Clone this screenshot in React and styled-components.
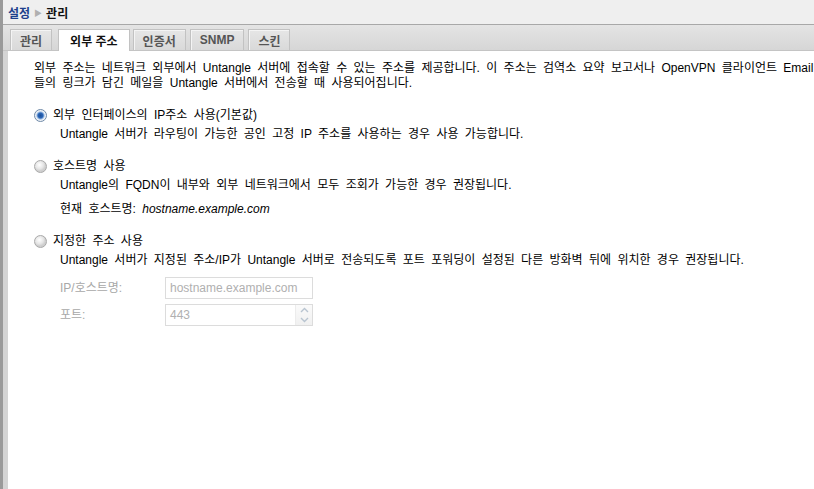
import React from "react";
import styled, { createGlobalStyle } from "styled-components";

const Global = createGlobalStyle`
  html, body { margin: 0; padding: 0; background: #fff; overflow: hidden; }
  body { font-family: "Liberation Sans", "Noto Sans CJK KR", sans-serif; font-size: 12px; color: #000; }
`;

const Page = styled.div`
  width: 814px;
  height: 489px;
  display: flex;
  flex-direction: column;
  border-left: 3px solid #9a9a9a;
  box-sizing: border-box;
  overflow: hidden;
`;

const Header = styled.div`
  height: 24px;
  flex: none;
  display: flex;
  align-items: center;
  padding-left: 5px;
  background: #efefef;
  border-bottom: 1px solid #a8a8a8;
  font-weight: bold;
  gap: 4px;
`;

const Crumb = styled.span`
  color: ${(p) => (p.$link ? "#1d3f8c" : "#111")};
`;

const Sep = styled.span`
  color: #b0b0b0;
  font-size: 8px;
`;

const TabStrip = styled.div`
  height: 25px;
  flex: none;
  display: flex;
  align-items: flex-end;
  gap: 4px;
  padding-left: 7px;
  background: linear-gradient(#e4e4e4, #d6d6d6);
  border-bottom: 1px solid #c4c4c4;
`;

const Tab = styled.div`
  box-sizing: border-box;
  padding: 0 ${(p) => (p.$active ? 11 : 9)}px;
  display: flex;
  align-items: center;
  font-weight: bold;
  color: ${(p) => (p.$active ? "#111" : "#555")};
  background: ${(p) => (p.$active ? "#fff" : "linear-gradient(#e6e6e6, #d9d9d9)")};
  border: 1px solid #c2c2c2;
  border-bottom: none;
  box-shadow: ${(p) => (p.$active ? "none" : "inset 1px 1px 0 #f4f4f4")};
  margin: 0 ${(p) => (p.$active ? "-1px -1px 2px" : "0 0 0")};
  height: ${(p) => (p.$active ? "22px" : "21px")};
`;

const Body = styled.div`
  flex: 1;
  display: flex;
  border-left: 5px solid #d4d4d4;
  background: #fff;
`;

const Content = styled.div`
  padding: 10px 0 0 26px;
  white-space: nowrap;
  line-height: 15px;
  word-spacing: 3px;
`;

const Intro = styled.div``;

const Option = styled.div`
  margin-top: ${(p) => p.$mt}px;
`;

const RadioRow = styled.label`
  display: flex;
  align-items: center;
  height: 16px;
  gap: 6px;
`;

const Radio = styled.span`
  width: 13px;
  height: 13px;
  box-sizing: border-box;
  border-radius: 50%;
  border: 1px solid ${(p) => (p.$checked ? "#6f8aa8" : "#a9a9a9")};
  background: ${(p) =>
    p.$checked
      ? "radial-gradient(circle at 50% 50%, #1c4f98 0, #2b66b8 2.5px, #8fb3de 3.5px, #e8eef6 4.5px, #f8f8f8 6px)"
      : "radial-gradient(circle at 40% 35%, #ffffff 0, #e6e6e6 4px, #cfcfcf 6px)"};
  flex: none;
`;

const Desc = styled.div`
  margin-top: ${(p) => p.$mt || 3}px;
  padding-left: 26px;
  line-height: 16px;
`;

const Host = styled.span`
  font-style: italic;
`;

const FieldRow = styled.div`
  display: flex;
  align-items: center;
  margin-top: ${(p) => p.$mt}px;
  padding-left: 26px;
  word-spacing: 0;
`;

const FieldLabel = styled.span`
  width: 105px;
  color: #a8a8a8;
  flex: none;
`;

const InputBox = styled.div`
  width: 148px;
  height: 22px;
  box-sizing: border-box;
  border: 1px solid #dcdcdc;
  display: flex;
  align-items: center;
  padding-left: 4px;
  color: #b0b0b0;
  background: #fff;
`;

const InputText = styled.span`
  flex: 1;
`;

const Spin = styled.div`
  width: 16px;
  height: 20px;
  display: flex;
  flex-direction: column;
  border-left: 1px solid #ececec;
  background: linear-gradient(#fafafa, #f0f0f0);
`;

const SpinHalf = styled.div`
  flex: 1;
  display: flex;
  align-items: center;
  justify-content: center;
`;

const Chevron = ({ up }) => (
  <svg width="9" height="6" viewBox="0 0 9 6">
    <path
      d={up ? "M1 5 L4.5 1.5 L8 5" : "M1 1 L4.5 4.5 L8 1"}
      fill="none"
      stroke="#b8c4d0"
      strokeWidth="1.4"
    />
  </svg>
);

export default function App() {
  return (
    <>
      <Global />
      <Page>
        <Header>
          <Crumb $link>설정</Crumb>
          <Sep>▶</Sep>
          <Crumb>관리</Crumb>
        </Header>
        <TabStrip>
          <Tab>관리</Tab>
          <Tab $active>외부 주소</Tab>
          <Tab>인증서</Tab>
          <Tab>SNMP</Tab>
          <Tab>스킨</Tab>
        </TabStrip>
        <Body>
          <Content>
            <Intro>
              외부 주소는 네트워크 외부에서 Untangle 서버에 접속할 수 있는 주소를 제공합니다. 이 주소는 검역소 요약 보고서나 OpenVPN 클라이언트 Email
              <br />
              들의 링크가 담긴 메일을 Untangle 서버에서 전송할 때 사용되어집니다.
            </Intro>
            <Option $mt={16}>
              <RadioRow>
                <Radio $checked />
                외부 인터페이스의 IP주소 사용(기본값)
              </RadioRow>
              <Desc>Untangle 서버가 라우팅이 가능한 공인 고정 IP 주소를 사용하는 경우 사용 가능합니다.</Desc>
            </Option>
            <Option $mt={16}>
              <RadioRow>
                <Radio />
                호스트명 사용
              </RadioRow>
              <Desc>Untangle의 FQDN이 내부와 외부 네트워크에서 모두 조회가 가능한 경우 권장됩니다.</Desc>
              <Desc $mt={8}>
                현재 호스트명: <Host>hostname.example.com</Host>
              </Desc>
            </Option>
            <Option $mt={16}>
              <RadioRow>
                <Radio />
                지정한 주소 사용
              </RadioRow>
              <Desc>Untangle 서버가 지정된 주소/IP가 Untangle 서버로 전송되도록 포트 포워딩이 설정된 다른 방화벽 뒤에 위치한 경우 권장됩니다.</Desc>
              <FieldRow $mt={9}>
                <FieldLabel>IP/호스트명:</FieldLabel>
                <InputBox>
                  <InputText>hostname.example.com</InputText>
                </InputBox>
              </FieldRow>
              <FieldRow $mt={5}>
                <FieldLabel>포트:</FieldLabel>
                <InputBox>
                  <InputText>443</InputText>
                  <Spin>
                    <SpinHalf>
                      <Chevron up />
                    </SpinHalf>
                    <SpinHalf>
                      <Chevron />
                    </SpinHalf>
                  </Spin>
                </InputBox>
              </FieldRow>
            </Option>
          </Content>
        </Body>
      </Page>
    </>
  );
}
